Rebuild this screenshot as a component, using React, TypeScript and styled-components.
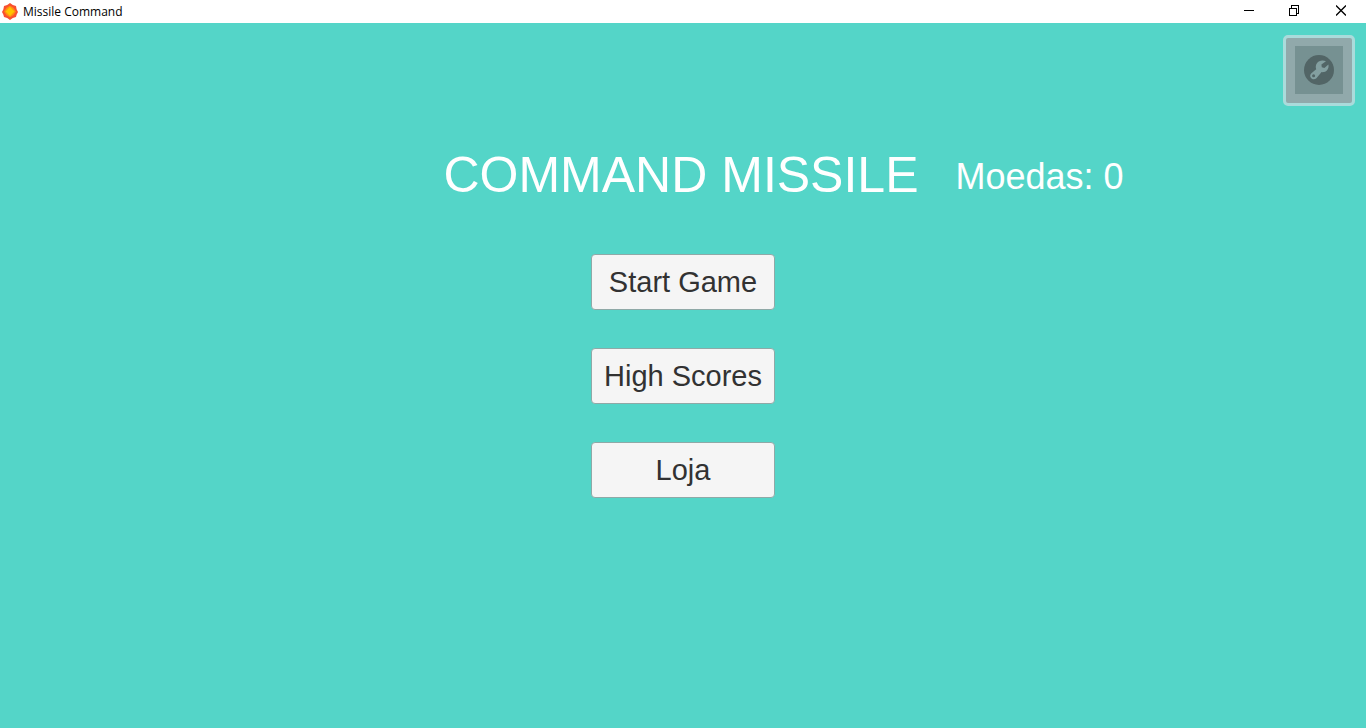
import React from 'react';
import styled, { createGlobalStyle } from 'styled-components';

const GlobalStyle = createGlobalStyle`
  *, *::before, *::after { box-sizing: border-box; }
  body { margin: 0; background: #54d5c8; }
  h1, p { margin: 0; font-weight: 400; }
  button { font: inherit; color: inherit; cursor: pointer; }
`;

const Window = styled.div`
  display: flex;
  flex-direction: column;
  min-height: 100vh;
  background: #54d5c8;
  font-family: "Liberation Sans", Arial, sans-serif;
`;

const TitleBar = styled.header`
  display: flex;
  align-items: center;
  height: 23px;
  padding: 0 2px;
  background: #fff;
  color: #000;
  font: 12px/16px "Open Sans", "Segoe UI", sans-serif;
`;

const WindowTitle = styled.span`
  flex: 1;
  margin-left: 5px;
`;

const WindowControls = styled.div`
  display: flex;
  align-self: flex-start;
`;

const WindowButton = styled.button`
  display: flex;
  align-items: center;
  justify-content: center;
  width: 46px;
  height: 21px;
  padding: 0;
  border: 0;
  background: none;
`;

const Screen = styled.main`
  display: flex;
  flex-direction: column;
  flex: 1;
`;

const Toolbar = styled.div`
  display: flex;
  justify-content: flex-end;
  padding: 12px 11px 0;
`;

const SettingsButton = styled.button`
  display: flex;
  align-items: center;
  justify-content: center;
  width: 72px;
  height: 71px;
  padding: 0 0 2px;
  border: 3px solid #aadbdb;
  border-radius: 5px;
  background: #91a9ab;
`;

const SettingsFace = styled.span`
  display: flex;
  align-items: center;
  justify-content: center;
  width: 48px;
  height: 48px;
  background: #769192;
`;

const Heading = styled.div`
  display: grid;
  grid-template-columns: 1fr auto 1fr;
  align-items: center;
  margin-top: 40px;
  padding-right: 4px;
  color: #fff;
`;

const GameTitle = styled.h1`
  grid-column: 2;
  font-size: 50px;
  line-height: 58px;
  white-space: nowrap;
`;

const Coins = styled.p`
  padding: 4px 0 0 37px;
  font-size: 36px;
  line-height: 42px;
  white-space: nowrap;
`;

const Menu = styled.nav`
  display: flex;
  flex-direction: column;
  align-items: center;
  gap: 38px;
  margin-top: 50px;
`;

const MenuButton = styled.button`
  width: 184px;
  height: 56px;
  padding: 0;
  border: 1px solid #8fa9a7;
  border-radius: 4px;
  background: #f5f5f5;
  && { color: #323232; font-size: 29px; line-height: 34px; }
`;

const BlastIcon = () => (
  <svg width="16" height="18" viewBox="0 0 16 18" aria-hidden="true">
    <path d="M8 0 10.8 2 14 3 14.6 6.2 16 9 14.6 11.8 14 14 10.8 15 8 17 5.2 15 2 14 1.4 11.8 0 9 1.4 6.2 2 3 5.2 2Z" fill="#f9502f" />
    <path d="M8 2.8 11.4 4.8 14 8.5 11.4 12.2 8 14.2 4.6 12.2 2 8.5 4.6 4.8Z" fill="#ff8c12" />
    <path d="M8 4 12.5 8.5 8 13 3.5 8.5Z" fill="#ffc400" />
  </svg>
);

const WrenchIcon = () => (
  <svg width="30" height="30" viewBox="0 0 30 30" aria-hidden="true">
    <circle cx="15" cy="15" r="15" fill="#526566" />
    <path
      fill="#839fa0"
      fillRule="evenodd"
      d="M22 6.2 17.4 9.6 17.8 12.2 20.4 13 24.4 9.4C25.4 14 22 17.6 17.6 17.1L12.4 23.2C10.6 25 7.8 24.6 6.7 22.6 5.8 21 6.2 19.3 7.4 18.2L12.2 14.2C10.3 9 15.2 3.6 22 6.2ZM9.6 19.3A1.5 1.5 0 1 0 9.6 22.3A1.5 1.5 0 1 0 9.6 19.3Z"
    />
  </svg>
);

const menuItems = ['Start Game', 'High Scores', 'Loja'];

export default function App() {
  return (
    <Window>
      <GlobalStyle />
      <TitleBar>
        <BlastIcon />
        <WindowTitle>Missile Command</WindowTitle>
        <WindowControls>
          <WindowButton type="button" aria-label="Minimize">
            <svg width="10" height="11" shapeRendering="crispEdges" aria-hidden="true">
              <path d="M0 5.5H10" stroke="#000" />
            </svg>
          </WindowButton>
          <WindowButton type="button" aria-label="Restore">
            <svg width="12" height="11" fill="none" stroke="#000" shapeRendering="crispEdges" aria-hidden="true">
              <path d="M.5 3.5H7.5V10.5H.5ZM2.5 3.5V.5H9.5V8.5H7.5" />
            </svg>
          </WindowButton>
          <WindowButton type="button" aria-label="Close">
            <svg width="10" height="11" fill="none" stroke="#000" strokeWidth="1.3" aria-hidden="true">
              <path d="M0 .5 10 10.5M10 .5 0 10.5" />
            </svg>
          </WindowButton>
        </WindowControls>
      </TitleBar>
      <Screen>
        <Toolbar>
          <SettingsButton type="button" aria-label="Settings">
            <SettingsFace>
              <WrenchIcon />
            </SettingsFace>
          </SettingsButton>
        </Toolbar>
        <Heading>
          <GameTitle>COMMAND MISSILE</GameTitle>
          <Coins>Moedas: 0</Coins>
        </Heading>
        <Menu aria-label="Menu">
          {menuItems.map((item) => (
            <MenuButton key={item} type="button">{item}</MenuButton>
          ))}
        </Menu>
      </Screen>
    </Window>
  );
}
